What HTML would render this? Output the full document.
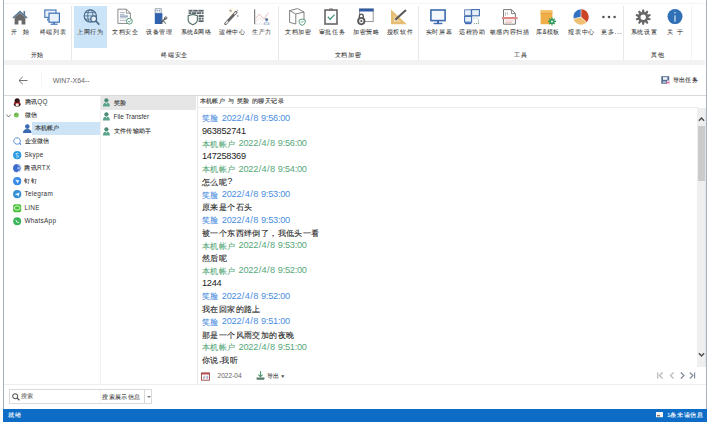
<!DOCTYPE html>
<html><head><meta charset="utf-8"><style>
html,body{margin:0;padding:0;}
body{width:710px;height:424px;position:relative;overflow:hidden;background:#fff;font-family:"Liberation Sans", sans-serif;}
.t{position:absolute;white-space:nowrap;}
.r{position:absolute;display:block;overflow:visible;}
</style></head><body>
<div class="r" style="left:3px;top:0px;width:1px;height:409px;background:#a9b1bd;"></div>
<div class="r" style="left:706px;top:0px;width:1px;height:409px;background:#a9b1bd;"></div>
<div class="r" style="left:4px;top:3px;width:702px;height:1px;background:#f3f3f3;"></div>
<div class="r" style="left:74px;top:6px;width:33px;height:42px;background:#cce4f7;"></div>
<div class="r" style="left:71px;top:6px;width:1px;height:54px;background:#e8e8e8;"></div>
<div class="r" style="left:278px;top:6px;width:1px;height:54px;background:#e8e8e8;"></div>
<div class="r" style="left:418px;top:6px;width:1px;height:54px;background:#e8e8e8;"></div>
<div class="r" style="left:623px;top:6px;width:1px;height:54px;background:#e8e8e8;"></div>
<div class="r" style="left:691px;top:6px;width:1px;height:54px;background:#f4f4f4;"></div>
<div class="r" style="left:4px;top:60px;width:701px;height:5px;background:#f2f2f2;"></div>
<svg class="r" style="left:12px;top:8.5px;" width="16" height="16" viewBox="0 0 16 16"><path d="M8 1.6 L0.4 8.4 L1.6 9.4 L8 3.8 L14.4 9.4 L15.6 8.4 Z" fill="#5b7894"/><rect x="11.5" y="2" width="1.6" height="4" fill="#5b7894"/><path d="M2.6 8.6 L8 4 L13.4 8.6 V15.4 H9.6 V11.5 H6.4 V15.4 H2.6 Z" fill="#6a6a6a"/></svg>
<div class="t" style="left:-19.80px;width:80px;text-align:center;top:28.24px;font-size:6.4px;line-height:8.32px;color:#333;-webkit-text-stroke:0.04px #333;"><span style="letter-spacing:0.6px;">开</span>&nbsp;&nbsp;&nbsp;<span style="letter-spacing:0.6px;">始</span></div>
<svg class="r" style="left:44px;top:8.5px;" width="16" height="16" viewBox="0 0 16 16"><rect x="0.8" y="1" width="11.2" height="7.4" fill="#e9f2fb" stroke="#3f73b5" stroke-width="1.1"/><rect x="5" y="4.2" width="10.4" height="9" fill="#e9f2fb" stroke="#3f73b5" stroke-width="1.2"/><rect x="9" y="13.2" width="2" height="1.6" fill="#3f73b5"/><rect x="6.6" y="14.6" width="7" height="1.2" fill="#3f73b5"/><rect x="3.2" y="9.5" width="1.4" height="2.2" fill="#3f73b5"/></svg>
<div class="t" style="left:13.00px;width:80px;text-align:center;top:28.24px;font-size:6.4px;line-height:8.32px;color:#333;-webkit-text-stroke:0.04px #333;"><span style="letter-spacing:0.6px;">终端列表</span></div>
<svg class="r" style="left:82.5px;top:8.5px;" width="16" height="16" viewBox="0 0 16 16"><g fill="none" stroke="#48698a"><circle cx="7.3" cy="6.9" r="6.1" stroke-width="1.2"/><ellipse cx="7.3" cy="6.9" rx="2.6" ry="6.1" stroke-width="0.9"/><path d="M1.2 6.9 H13.4 M2.2 3.6 H12.4 M2.2 10.2 H12.4" stroke-width="0.8"/></g><circle cx="10.7" cy="9.9" r="2.9" fill="#e6eff6" stroke="#48698a" stroke-width="1.2"/><path d="M12.8 12 L15.8 15.2" stroke="#48698a" stroke-width="1.7" stroke-linecap="round"/></svg>
<div class="t" style="left:50.50px;width:80px;text-align:center;top:28.24px;font-size:6.4px;line-height:8.32px;color:#333;-webkit-text-stroke:0.04px #333;"><span style="letter-spacing:0.6px;">上网行为</span></div>
<svg class="r" style="left:117px;top:8.5px;" width="16" height="16" viewBox="0 0 16 16"><path d="M0.9 0.2 H9.4 L13.4 4.2 V14.4 H0.9 Z" fill="#fff" stroke="#7a7a7a" stroke-width="0.9"/><path d="M9.4 0.2 V4.2 H13.4" fill="none" stroke="#7a7a7a" stroke-width="0.8"/><path d="M3 3.6 H7.5 M3 5.4 H7.5 M3 8.8 H10.5 M3 11.4 H9" stroke="#9aa4b0" stroke-width="0.8"/><path d="M3 7.1 H11" stroke="#4a6ea0" stroke-width="0.9"/><circle cx="12.4" cy="12.2" r="2.9" fill="#fff" stroke="#3e8a6a" stroke-width="0.9"/><path d="M11.1 12.2 L12.1 13.2 L13.7 11.4" fill="none" stroke="#3e8a6a" stroke-width="0.8"/></svg>
<div class="t" style="left:85.50px;width:80px;text-align:center;top:28.24px;font-size:6.4px;line-height:8.32px;color:#333;-webkit-text-stroke:0.04px #333;"><span style="letter-spacing:0.6px;">文档安全</span></div>
<svg class="r" style="left:152px;top:8.5px;" width="16" height="16" viewBox="0 0 16 16"><rect x="3.2" y="-0.2" width="6" height="4.4" fill="#fff" stroke="#7a8a9a" stroke-width="0.8"/><rect x="4.6" y="1.2" width="1.1" height="1.1" fill="#4a6a9a"/><rect x="6.8" y="1.2" width="1.1" height="1.1" fill="#4a6a9a"/><rect x="2.8" y="4.2" width="7.6" height="10.8" fill="#2f63b0"/><path d="M8.2 14.6 L13.6 9.2" stroke="#555" stroke-width="1.3"/><path d="M9 9.6 L13.8 14.6" stroke="#777" stroke-width="1.1"/><circle cx="13.8" cy="9" r="1.2" fill="none" stroke="#555" stroke-width="0.9"/></svg>
<div class="t" style="left:119.50px;width:80px;text-align:center;top:28.24px;font-size:6.4px;line-height:8.32px;color:#333;-webkit-text-stroke:0.04px #333;"><span style="letter-spacing:0.6px;">设备管理</span></div>
<svg class="r" style="left:187.5px;top:8.5px;" width="16" height="16" viewBox="0 0 16 16"><g fill="#5e6a70"><rect x="0.6" y="0.8" width="4" height="1.9"/><rect x="5.2" y="0.8" width="4.6" height="1.9"/><rect x="10.4" y="0.8" width="5.2" height="1.9"/><rect x="0.6" y="3.2" width="2.4" height="1.9"/><rect x="3.6" y="3.2" width="4.4" height="1.9"/><rect x="8.6" y="3.2" width="4.6" height="1.9"/><rect x="13.8" y="3.2" width="1.8" height="1.9"/><rect x="10.6" y="6" width="5" height="2"/><rect x="10.6" y="8.6" width="2.6" height="2"/><rect x="13.8" y="8.6" width="1.8" height="2"/><rect x="10.6" y="11.2" width="5" height="1.9"/></g><path d="M4.8 5.4 L9.4 6.8 V11 Q9.4 14 4.8 15.8 Q0.2 14 0.2 11 V6.8 Z" fill="#fff" stroke="#58786c" stroke-width="1.2"/></svg>
<div class="t" style="left:156.00px;width:80px;text-align:center;top:28.24px;font-size:6.4px;line-height:8.32px;color:#333;-webkit-text-stroke:0.04px #333;"><span style="letter-spacing:0.6px;">系统</span>&amp;<span style="letter-spacing:0.6px;">网络</span></div>
<svg class="r" style="left:223.5px;top:8.5px;" width="16" height="16" viewBox="0 0 16 16"><circle cx="8" cy="2" r="3.5" fill="#fffbe6" opacity="0.7"/><path d="M1.6 14.6 L12.1 3.3" stroke="#666" stroke-width="2.8" stroke-linecap="round"/><path d="M1.9 14.3 L3.6 12.5 M10.6 4.9 L11.8 3.6" stroke="#f4f4f4" stroke-width="1.3" stroke-linecap="round"/><circle cx="6.6" cy="1.8" r="1.2" fill="#aaa"/><circle cx="13.8" cy="7.1" r="1" fill="#aaa"/><circle cx="13.5" cy="1" r="0.7" fill="#bbb"/></svg>
<div class="t" style="left:192.50px;width:80px;text-align:center;top:28.24px;font-size:6.4px;line-height:8.32px;color:#333;-webkit-text-stroke:0.04px #333;"><span style="letter-spacing:0.6px;">运维中心</span></div>
<svg class="r" style="left:254px;top:8.5px;" width="16" height="16" viewBox="0 0 16 16"><path d="M0.7 0.3 V15.2" stroke="#555" stroke-width="0.9"/><path d="M1.6 9.6 L5.2 5 L10 10.2 L14.4 3.6" fill="none" stroke="#dca0a0" stroke-width="0.7"/><path d="M1.6 13 L5.6 8.8 L9 12" fill="none" stroke="#e8c4c4" stroke-width="0.6"/><path d="M1.6 15 H8.6" stroke="#a8b8cc" stroke-width="0.6" stroke-dasharray="1 0.8"/><circle cx="12.6" cy="10.4" r="1.5" fill="#5a7aa0"/><path d="M10.6 13.4 Q12.6 11.6 14.6 13.4 Z" fill="#8aa2c0"/><path d="M9.4 15.2 H15.8 M10.4 13.4 V15.2 M14.8 13.4 V15.2" stroke="#8aa2c0" stroke-width="0.7"/></svg>
<div class="t" style="left:222.00px;width:80px;text-align:center;top:28.24px;font-size:6.4px;line-height:8.32px;color:#333;-webkit-text-stroke:0.04px #333;"><span style="letter-spacing:0.6px;">生产力</span></div>
<svg class="r" style="left:289px;top:8.5px;" width="16" height="16" viewBox="0 0 16 16"><path d="M0.6 1.6 L8.6 -0.4 L15 3 V12 L6.8 15 L0.6 13.4 Z" fill="#fff"/><path d="M0.6 1.6 L8.6 -0.4 L15 3 V11 M15 3 L6.8 5 L0.6 1.6 V13.4 L6.8 15 V5" fill="none" stroke="#747474" stroke-width="0.9"/><path d="M13.2 10 L16.2 11 V13.4 Q16.2 15.4 13.2 16.4 Q10.2 15.4 10.2 13.4 V11 Z" fill="#fff" stroke="#5a9a7e" stroke-width="1"/><path d="M11.8 13.2 L14.6 12.6" stroke="#5a9a7e" stroke-width="0.8"/></svg>
<div class="t" style="left:258.50px;width:80px;text-align:center;top:28.24px;font-size:6.4px;line-height:8.32px;color:#333;-webkit-text-stroke:0.04px #333;"><span style="letter-spacing:0.6px;">文档加密</span></div>
<svg class="r" style="left:324px;top:8.5px;" width="16" height="16" viewBox="0 0 16 16"><rect x="1" y="1" width="12" height="14" fill="#fff" stroke="#666" stroke-width="1.6"/><rect x="5" y="-0.5" width="4" height="2.4" fill="#777"/><path d="M3.8 7.8 L6.2 10.2 L10.6 5.6" fill="none" stroke="#4e9a7a" stroke-width="1.3"/></svg>
<div class="t" style="left:292.00px;width:80px;text-align:center;top:28.24px;font-size:6.4px;line-height:8.32px;color:#333;-webkit-text-stroke:0.04px #333;"><span style="letter-spacing:0.6px;">审批任务</span></div>
<svg class="r" style="left:357px;top:8.5px;" width="16" height="16" viewBox="0 0 16 16"><rect x="2.6" y="0" width="13.6" height="12.6" fill="#fff" stroke="#8a8a8a" stroke-width="0.9"/><rect x="2.2" y="-0.4" width="14.4" height="2.9" fill="#2f5ca4"/><path d="M2.3 9.5 V7.4 Q2.3 5.2 4.3 5.2 Q6.3 5.2 6.3 7.4 V9.5" fill="none" stroke="#555" stroke-width="1.3"/><circle cx="4.3" cy="12.1" r="4.1" fill="#5a5a5a"/><circle cx="4.3" cy="12.1" r="2.3" fill="#eee"/><circle cx="4.3" cy="12.1" r="1" fill="#555"/></svg>
<div class="t" style="left:326.40px;width:80px;text-align:center;top:28.24px;font-size:6.4px;line-height:8.32px;color:#333;-webkit-text-stroke:0.04px #333;"><span style="letter-spacing:0.6px;">加密策略</span></div>
<svg class="r" style="left:391px;top:8.5px;" width="16" height="16" viewBox="0 0 16 16"><path d="M0 0.4 L15.8 15.2 H0 Z" fill="#e6bd72"/><path d="M3 6.6 L9.6 12.8 H3 Z" fill="#f0d49c"/><path d="M4.6 10.6 L14.4 1.6" stroke="#5a5a5a" stroke-width="2.1" stroke-linecap="round"/><path d="M3.2 12 L4.4 10.8" stroke="#f4f0e8" stroke-width="1.4"/></svg>
<div class="t" style="left:360.00px;width:80px;text-align:center;top:28.24px;font-size:6.4px;line-height:8.32px;color:#333;-webkit-text-stroke:0.04px #333;"><span style="letter-spacing:0.6px;">授权软件</span></div>
<svg class="r" style="left:430px;top:8.5px;" width="16" height="16" viewBox="0 0 16 16"><rect x="0.9" y="1" width="14.2" height="10.6" fill="#f3f7fc" stroke="#3e6cae" stroke-width="1.6"/><rect x="7" y="11.8" width="2" height="2.4" fill="#3e6cae"/><rect x="3.6" y="13.8" width="8.8" height="1.4" fill="#3e6cae"/></svg>
<div class="t" style="left:399.00px;width:80px;text-align:center;top:28.24px;font-size:6.4px;line-height:8.32px;color:#333;-webkit-text-stroke:0.04px #333;"><span style="letter-spacing:0.6px;">实时屏幕</span></div>
<svg class="r" style="left:464px;top:8.5px;" width="16" height="16" viewBox="0 0 16 16"><rect x="0.6" y="0.8" width="6.6" height="5.6" fill="#e6f0fa" stroke="#5a7ab0" stroke-width="0.9"/><rect x="7.6" y="0.6" width="7.8" height="6.2" fill="#e6f0fa" stroke="#3f6cb0" stroke-width="1.1"/><rect x="0.6" y="7.4" width="7" height="5.8" fill="#e6f0fa" stroke="#3f6cb0" stroke-width="1.1"/><rect x="1" y="13.6" width="6.4" height="1.6" fill="#3f6cb0"/><g fill="#6a9a7a"><circle cx="10" cy="9" r="0.6"/><circle cx="13" cy="9" r="0.6"/><circle cx="14.5" cy="11" r="0.6"/><circle cx="14.5" cy="13" r="0.6"/><circle cx="10.5" cy="14.5" r="0.6"/><circle cx="12.5" cy="14.5" r="0.6"/><circle cx="14.5" cy="14.5" r="0.6"/></g></svg>
<div class="t" style="left:432.50px;width:80px;text-align:center;top:28.24px;font-size:6.4px;line-height:8.32px;color:#333;-webkit-text-stroke:0.04px #333;"><span style="letter-spacing:0.6px;">远程协助</span></div>
<svg class="r" style="left:502px;top:8.5px;" width="16" height="16" viewBox="0 0 16 16"><path d="M1.5 0.6 H9.4 L13.4 4.6 V15.2 H1.5 Z" fill="#fff" stroke="#777" stroke-width="1"/><path d="M9.4 0.6 V4.6 H13.4" fill="none" stroke="#777" stroke-width="0.9"/><path d="M3.4 3 V7 M5.4 3 V6" stroke="#bbb" stroke-width="0.9"/><rect x="0" y="8" width="15.6" height="2.2" fill="#e08a8a"/><path d="M3.4 12 H11.6 M3.4 13.6 H10" stroke="#e8b0b0" stroke-width="0.8"/></svg>
<div class="t" style="left:469.60px;width:80px;text-align:center;top:28.24px;font-size:6.4px;line-height:8.32px;color:#333;-webkit-text-stroke:0.04px #333;"><span style="letter-spacing:0.6px;">敏感内容扫描</span></div>
<svg class="r" style="left:540px;top:8.5px;" width="16" height="16" viewBox="0 0 16 16"><rect x="0.6" y="1" width="11.8" height="14.2" rx="1" fill="#f0ae48"/><rect x="0.6" y="1" width="11.8" height="3" rx="1" fill="#f5c36c"/><path d="M0.6 4.2 H12.4" stroke="#e09a30" stroke-width="0.6"/><g transform="translate(12,12.4)"><circle r="2.6" fill="#2f9a5a"/><path d="M-4 0 H4 M0 -4 V4 M-2.8 -2.8 L2.8 2.8 M2.8 -2.8 L-2.8 2.8" stroke="#2f9a5a" stroke-width="1.2"/><circle r="1" fill="#fff"/></g></svg>
<div class="t" style="left:508.00px;width:80px;text-align:center;top:28.24px;font-size:6.4px;line-height:8.32px;color:#333;-webkit-text-stroke:0.04px #333;"><span style="letter-spacing:0.6px;">库</span>&amp;<span style="letter-spacing:0.6px;">模板</span></div>
<svg class="r" style="left:572.7px;top:8.5px;" width="16" height="16" viewBox="0 0 16 16"><path d="M8 8 L8 0.3 A7.7 7.7 0 0 1 13.63 13.25 Z" fill="#cc4428"/><path d="M8 8 L13.63 13.25 A7.7 7.7 0 0 1 0.53 9.86 Z" fill="#f0c070"/><path d="M8 8 L0.53 9.86 A7.7 7.7 0 0 1 8 0.3 Z" fill="#3470c0"/><path d="M8 8 L8 0.3 M8 8 L13.63 13.25 M8 8 L0.53 9.86" stroke="#fff" stroke-width="0.6"/></svg>
<div class="t" style="left:541.60px;width:80px;text-align:center;top:28.24px;font-size:6.4px;line-height:8.32px;color:#333;-webkit-text-stroke:0.04px #333;"><span style="letter-spacing:0.6px;">报表中心</span></div>
<svg class="r" style="left:601px;top:8.5px;" width="16" height="16" viewBox="0 0 16 16"><circle cx="2.4" cy="8" r="1.3" fill="#555"/><circle cx="8" cy="8" r="1.3" fill="#555"/><circle cx="13.6" cy="8" r="1.3" fill="#555"/></svg>
<div class="t" style="left:572.00px;width:80px;text-align:center;top:28.24px;font-size:6.4px;line-height:8.32px;color:#333;-webkit-text-stroke:0.04px #333;"><span style="letter-spacing:0.6px;">更多</span><span style="letter-spacing:0.9px">...</span></div>
<svg class="r" style="left:634.5px;top:8.5px;" width="16" height="16" viewBox="0 0 16 16"><path d="M6.86 3.17 L7.35 0.55 L9.05 0.55 L9.54 3.17 L10.07 3.35 L12.01 1.51 L13.38 2.51 L12.24 4.92 L12.57 5.38 L15.22 5.03 L15.74 6.64 L13.39 7.92 L13.39 8.48 L15.74 9.76 L15.22 11.37 L12.57 11.02 L12.24 11.48 L13.38 13.89 L12.01 14.89 L10.07 13.05 L9.54 13.23 L9.05 15.85 L7.35 15.85 L6.86 13.23 L6.33 13.05 L4.39 14.89 L3.02 13.89 L4.16 11.48 L3.83 11.02 L1.18 11.37 L0.66 9.76 L3.01 8.48 L3.01 7.92 L0.66 6.64 L1.18 5.03 L3.83 5.38 L4.16 4.92 L3.02 2.51 L4.39 1.51 L6.33 3.35 Z M8.2 5.5 A2.7 2.7 0 1 0 8.2 10.9 A2.7 2.7 0 1 0 8.2 5.5 Z" fill="#666" fill-rule="evenodd"/></svg>
<div class="t" style="left:604.00px;width:80px;text-align:center;top:28.24px;font-size:6.4px;line-height:8.32px;color:#333;-webkit-text-stroke:0.04px #333;"><span style="letter-spacing:0.6px;">系统设置</span></div>
<svg class="r" style="left:666.5px;top:8.5px;" width="16" height="16" viewBox="0 0 16 16"><circle cx="8" cy="7.6" r="7.5" fill="#3070b6"/><rect x="7.45" y="6.4" width="1.1" height="6.2" fill="#e8f4ff"/><rect x="7.45" y="3" width="1.1" height="1.4" fill="#e8f4ff"/></svg>
<div class="t" style="left:635.20px;width:80px;text-align:center;top:28.24px;font-size:6.4px;line-height:8.32px;color:#333;-webkit-text-stroke:0.04px #333;"><span style="letter-spacing:0.6px;">关</span>&nbsp;&nbsp;<span style="letter-spacing:0.6px;">于</span></div>
<div class="t" style="left:-2.60px;width:80px;text-align:center;top:50.84px;font-size:6.4px;line-height:8.32px;color:#333;-webkit-text-stroke:0.08px #444;"><span style="letter-spacing:0.6px;">开始</span></div>
<div class="t" style="left:134.70px;width:80px;text-align:center;top:50.84px;font-size:6.4px;line-height:8.32px;color:#333;-webkit-text-stroke:0.08px #444;"><span style="letter-spacing:0.6px;">终端安全</span></div>
<div class="t" style="left:308.00px;width:80px;text-align:center;top:50.84px;font-size:6.4px;line-height:8.32px;color:#333;-webkit-text-stroke:0.08px #444;"><span style="letter-spacing:0.6px;">文档加密</span></div>
<div class="t" style="left:481.00px;width:80px;text-align:center;top:50.84px;font-size:6.4px;line-height:8.32px;color:#333;-webkit-text-stroke:0.08px #444;"><span style="letter-spacing:0.6px;">工具</span></div>
<div class="t" style="left:617.80px;width:80px;text-align:center;top:50.84px;font-size:6.4px;line-height:8.32px;color:#333;-webkit-text-stroke:0.08px #444;"><span style="letter-spacing:0.6px;">其他</span></div>
<svg class="r" style="left:17.5px;top:76px;" width="10" height="9" viewBox="0 0 10 9"><path d="M1 4.5 H9.5 M4.8 0.8 L1 4.5 L4.8 8.2" fill="none" stroke="#6a6a6a" stroke-width="0.95"/></svg>
<div class="r" style="left:41px;top:72px;width:1px;height:15px;background:#f5f5f5;"></div>
<div class="t" style="left:52.7px;top:75.95px;font-size:7px;line-height:9.10px;color:#666;">WIN7-X64--</div>
<svg class="r" style="left:661px;top:76px;" width="9" height="8" viewBox="0 0 9 8"><path d="M0.3 0.3 H8.2 V4.6 H6 V7.8 H0.3 Z" fill="#4d6a8e"/><rect x="2" y="1.2" width="4.4" height="2.6" fill="#f4f6fa"/><rect x="1.8" y="5" width="3.2" height="2.2" fill="#a8b8cc"/><path d="M5.4 5.2 L8.6 7.8 M8.6 5.2 L5.4 7.8 M5.4 6.5 H8.6" stroke="#e06a9a" stroke-width="0.8"/></svg>
<div class="t" style="left:672.6px;top:76.17px;font-size:6.2px;line-height:8.06px;color:#333;-webkit-text-stroke:0.12px #333;"><span style="letter-spacing:0.4px;">导出任务</span></div>
<div class="r" style="left:4px;top:95px;width:702px;height:1px;background:#d9d9d9;"></div>
<div class="r" style="left:32px;top:122px;width:68px;height:13px;background:#cde4f7;"></div>
<div class="r" style="left:100px;top:96px;width:1px;height:288px;background:#f0f0f0;"></div>
<svg class="r" style="left:13.2px;top:97.8px;overflow:visible;" width="8.4" height="8.4" viewBox="0 0 8.4 8.4"><ellipse cx="4.2" cy="2.8" rx="2.6" ry="2.6" fill="#301414"/><ellipse cx="4.2" cy="6.2" rx="3.4" ry="2.5" fill="#3a1616"/><path d="M1.4 4.2 Q4.2 5.6 7 4.2 L7.2 5.4 Q4.2 6.8 1.2 5.4 Z" fill="#c02424"/><ellipse cx="4.2" cy="6.8" rx="1.7" ry="1.6" fill="#f6e6e6"/><path d="M4.6 2.6 Q5.4 3.6 4.6 4.4" fill="none" stroke="#a03030" stroke-width="0.6"/></svg>
<div class="t" style="left:24.6px;top:97.84px;font-size:6.4px;line-height:8.32px;color:#333;letter-spacing:0.3px;"><span style="letter-spacing:0.3px;-webkit-text-stroke:0.12px currentColor;">腾讯</span>QQ</div>
<svg class="r" style="left:13.2px;top:111.1px;overflow:visible;" width="8.4" height="8.4" viewBox="0 0 8.4 8.4"><circle cx="3.4" cy="4" r="2.5" fill="#7cc45a"/><circle cx="2.6" cy="3.6" r="0.45" fill="#3a6a2a"/><circle cx="4.2" cy="3.6" r="0.45" fill="#3a6a2a"/></svg>
<div class="t" style="left:24.6px;top:111.14px;font-size:6.4px;line-height:8.32px;color:#333;letter-spacing:0.3px;"><span style="letter-spacing:0.3px;-webkit-text-stroke:0.12px currentColor;">微信</span></div>
<svg class="r" style="left:23px;top:123.8px;" width="9" height="9" viewBox="0 0 9 9"><circle cx="4.3" cy="2.6" r="2.3" fill="#3a6ab0"/><path d="M0 9 Q0 5 4.3 5 Q8.6 5 8.6 9 Z" fill="#3a6ab0"/></svg>
<div class="t" style="left:34.5px;top:124.14px;font-size:6.4px;line-height:8.32px;color:#333;letter-spacing:0.3px;"><span style="letter-spacing:0.3px;-webkit-text-stroke:0.12px currentColor;">本机帐户</span></div>
<svg class="r" style="left:13.2px;top:137.2px;overflow:visible;" width="8.4" height="8.4" viewBox="0 0 8.4 8.4"><path d="M4 0.8 A3.4 3.2 0 1 0 6.6 6.2 L7.6 7.8 L7 5.4 A3.4 3.2 0 0 0 4 0.8 Z" fill="none" stroke="#5a8ad8" stroke-width="1"/></svg>
<div class="t" style="left:24.6px;top:137.24px;font-size:6.4px;line-height:8.32px;color:#333;letter-spacing:0.3px;"><span style="letter-spacing:0.3px;-webkit-text-stroke:0.12px currentColor;">企业微信</span></div>
<svg class="r" style="left:13.2px;top:151.1px;overflow:visible;" width="8.4" height="8.4" viewBox="0 0 8.4 8.4"><circle cx="4.2" cy="4.2" r="4.1" fill="#2a9be2"/><path d="M5.6 2.6 Q4.2 1.8 3 2.6 Q2.4 3.6 4.2 4.2 Q6 4.8 5.4 5.8 Q4.2 6.6 2.8 5.8" fill="none" stroke="#d8f0ff" stroke-width="0.8"/></svg>
<div class="t" style="left:24.4px;top:151.14px;font-size:6.4px;line-height:8.32px;color:#333;letter-spacing:0.3px;">Skype</div>
<svg class="r" style="left:13.2px;top:164.0px;overflow:visible;" width="8.4" height="8.4" viewBox="0 0 8.4 8.4"><circle cx="4.2" cy="4.2" r="4.1" fill="#3d6ccc"/><path d="M4.6 0.6 A3.6 3.6 0 0 1 4.6 7.8" fill="none" stroke="#fff" stroke-width="0.9"/><circle cx="5.6" cy="4.2" r="1.4" fill="#8fb0ec"/></svg>
<div class="t" style="left:24.4px;top:164.04px;font-size:6.4px;line-height:8.32px;color:#333;letter-spacing:0.3px;"><span style="letter-spacing:0.3px;-webkit-text-stroke:0.12px currentColor;">腾讯</span>RTX</div>
<svg class="r" style="left:13.2px;top:177.1px;overflow:visible;" width="8.4" height="8.4" viewBox="0 0 8.4 8.4"><circle cx="4.2" cy="4.2" r="4.1" fill="#3a8ce8"/><path d="M2.2 2.6 L6.4 3.6 L4.4 6.6 L3.8 4.8 Z" fill="#e8f2ff"/></svg>
<div class="t" style="left:24.4px;top:177.14px;font-size:6.4px;line-height:8.32px;color:#333;letter-spacing:0.3px;"><span style="letter-spacing:0.3px;-webkit-text-stroke:0.12px currentColor;">钉钉</span></div>
<svg class="r" style="left:13.2px;top:190.3px;overflow:visible;" width="8.4" height="8.4" viewBox="0 0 8.4 8.4"><circle cx="4.2" cy="4.2" r="4.1" fill="#3590d6"/><path d="M1.8 4.2 L6.6 2.4 L5.6 6.4 L4 5 Z" fill="#e8f4ff"/></svg>
<div class="t" style="left:24.4px;top:190.34px;font-size:6.4px;line-height:8.32px;color:#333;letter-spacing:0.3px;">Telegram</div>
<svg class="r" style="left:13.2px;top:203.6px;overflow:visible;" width="8.4" height="8.4" viewBox="0 0 8.4 8.4"><rect x="0.2" y="0.2" width="8" height="8" rx="1.8" fill="#46c034"/><ellipse cx="4.2" cy="4" rx="2.8" ry="2.1" fill="none" stroke="#fff" stroke-width="0.8"/></svg>
<div class="t" style="left:24.4px;top:203.64px;font-size:6.4px;line-height:8.32px;color:#333;letter-spacing:0.3px;">LINE</div>
<svg class="r" style="left:13.2px;top:216.8px;overflow:visible;" width="8.4" height="8.4" viewBox="0 0 8.4 8.4"><circle cx="4.2" cy="4.2" r="4" fill="#3cb45c"/><path d="M2.8 3 Q3.4 5.8 5.8 5.6" fill="none" stroke="#fff" stroke-width="0.9"/></svg>
<div class="t" style="left:24.4px;top:216.84px;font-size:6.4px;line-height:8.32px;color:#333;letter-spacing:0.3px;">WhatsApp</div>
<svg class="r" style="left:6px;top:113.5px;" width="5" height="4" viewBox="0 0 5 4"><path d="M0.4 0.6 L2.5 3 L4.6 0.6" fill="none" stroke="#666" stroke-width="0.9"/></svg>
<div class="r" style="left:100.5px;top:96px;width:95.5px;height:14px;background:#e6e6e6;"></div>
<div class="r" style="left:197px;top:96px;width:1px;height:288px;background:#e6e6e6;"></div>
<svg class="r" style="left:101.5px;top:98.2px;" width="9" height="9" viewBox="0 0 9 9"><circle cx="4.4" cy="2.3" r="2.1" fill="#4e8c7a"/><path d="M0.9 8.6 Q0.9 4.6 4.4 4.6 Q7.9 4.6 7.9 8.6 Z" fill="#5aa58a"/><path d="M3.4 4.7 L4.4 6.2 L5.4 4.7 Z" fill="#cfeee2"/></svg>
<div class="t" style="left:113.5px;top:98.54px;font-size:6.4px;line-height:8.32px;color:#333;"><span style="letter-spacing:0.4px;-webkit-text-stroke:0.12px currentColor;">笑脸</span></div>
<svg class="r" style="left:101.5px;top:112.3px;" width="9" height="9" viewBox="0 0 9 9"><circle cx="4.4" cy="2.3" r="2.1" fill="#4e8c7a"/><path d="M0.9 8.6 Q0.9 4.6 4.4 4.6 Q7.9 4.6 7.9 8.6 Z" fill="#5aa58a"/><path d="M3.4 4.7 L4.4 6.2 L5.4 4.7 Z" fill="#cfeee2"/></svg>
<div class="t" style="left:113.5px;top:112.64px;font-size:6.4px;line-height:8.32px;color:#333;">File Transfer</div>
<svg class="r" style="left:101.5px;top:126.5px;" width="9" height="9" viewBox="0 0 9 9"><circle cx="4.4" cy="2.3" r="2.1" fill="#4e8c7a"/><path d="M0.9 8.6 Q0.9 4.6 4.4 4.6 Q7.9 4.6 7.9 8.6 Z" fill="#5aa58a"/><path d="M3.4 4.7 L4.4 6.2 L5.4 4.7 Z" fill="#cfeee2"/></svg>
<div class="t" style="left:113.5px;top:126.84px;font-size:6.4px;line-height:8.32px;color:#333;"><span style="letter-spacing:0.4px;-webkit-text-stroke:0.12px currentColor;">文件传输助手</span></div>
<div class="t" style="left:199.6px;top:97.47px;font-size:6.2px;line-height:8.06px;color:#333;-webkit-text-stroke:0.12px currentColor;word-spacing:0.8px;"><span style="letter-spacing:0.4px;">本机帐户</span> <span style="letter-spacing:0.4px;">与</span> <span style="letter-spacing:0.4px;">笑脸</span> <span style="letter-spacing:0.4px;">的聊天记录</span></div>
<div class="r" style="left:197px;top:107px;width:501px;height:1px;background:#ececec;"></div>
<div class="t" style="left:202px;top:111.80px;font-size:9.2px;line-height:12.00px;color:#4a8ee0;letter-spacing:-0.25px;word-spacing:0.7px;"><span style="font-size:8.4px;letter-spacing:0.4px;position:relative;top:0.6px;-webkit-text-stroke:0.1px currentColor;">笑脸</span> 2022<span style="padding:0 0.6px">/</span>4<span style="padding:0 0.6px">/</span>8 9:56:00</div>
<div class="t" style="left:202px;top:124.52px;font-size:9.2px;line-height:12.00px;color:#222;letter-spacing:-0.25px;word-spacing:0.7px;">963852741</div>
<div class="t" style="left:202px;top:137.24px;font-size:9.2px;line-height:12.00px;color:#56a87a;letter-spacing:-0.25px;word-spacing:0.7px;"><span style="font-size:8.4px;letter-spacing:0.4px;position:relative;top:0.6px;-webkit-text-stroke:0.1px currentColor;">本机帐户</span> 2022<span style="padding:0 0.6px">/</span>4<span style="padding:0 0.6px">/</span>8 9:56:00</div>
<div class="t" style="left:202px;top:149.96px;font-size:9.2px;line-height:12.00px;color:#222;letter-spacing:-0.25px;word-spacing:0.7px;">147258369</div>
<div class="t" style="left:202px;top:162.68px;font-size:9.2px;line-height:12.00px;color:#56a87a;letter-spacing:-0.25px;word-spacing:0.7px;"><span style="font-size:8.4px;letter-spacing:0.4px;position:relative;top:0.6px;-webkit-text-stroke:0.1px currentColor;">本机帐户</span> 2022<span style="padding:0 0.6px">/</span>4<span style="padding:0 0.6px">/</span>8 9:54:00</div>
<div class="t" style="left:202px;top:175.40px;font-size:9.2px;line-height:12.00px;color:#222;letter-spacing:-0.25px;word-spacing:0.7px;"><span style="font-size:8.4px;letter-spacing:0.4px;position:relative;top:0.6px;-webkit-text-stroke:0.1px currentColor;">怎么呢</span>?</div>
<div class="t" style="left:202px;top:188.12px;font-size:9.2px;line-height:12.00px;color:#4a8ee0;letter-spacing:-0.25px;word-spacing:0.7px;"><span style="font-size:8.4px;letter-spacing:0.4px;position:relative;top:0.6px;-webkit-text-stroke:0.1px currentColor;">笑脸</span> 2022<span style="padding:0 0.6px">/</span>4<span style="padding:0 0.6px">/</span>8 9:53:00</div>
<div class="t" style="left:202px;top:200.84px;font-size:9.2px;line-height:12.00px;color:#222;letter-spacing:-0.25px;word-spacing:0.7px;"><span style="font-size:8.4px;letter-spacing:0.4px;position:relative;top:0.6px;-webkit-text-stroke:0.1px currentColor;">原来是个石头</span></div>
<div class="t" style="left:202px;top:213.56px;font-size:9.2px;line-height:12.00px;color:#4a8ee0;letter-spacing:-0.25px;word-spacing:0.7px;"><span style="font-size:8.4px;letter-spacing:0.4px;position:relative;top:0.6px;-webkit-text-stroke:0.1px currentColor;">笑脸</span> 2022<span style="padding:0 0.6px">/</span>4<span style="padding:0 0.6px">/</span>8 9:53:00</div>
<div class="t" style="left:202px;top:226.28px;font-size:9.2px;line-height:12.00px;color:#222;letter-spacing:-0.25px;word-spacing:0.7px;"><span style="font-size:8.4px;letter-spacing:0.4px;position:relative;top:0.6px;-webkit-text-stroke:0.1px currentColor;">被一个东西绊倒了，我低头一看</span></div>
<div class="t" style="left:202px;top:239.00px;font-size:9.2px;line-height:12.00px;color:#56a87a;letter-spacing:-0.25px;word-spacing:0.7px;"><span style="font-size:8.4px;letter-spacing:0.4px;position:relative;top:0.6px;-webkit-text-stroke:0.1px currentColor;">本机帐户</span> 2022<span style="padding:0 0.6px">/</span>4<span style="padding:0 0.6px">/</span>8 9:53:00</div>
<div class="t" style="left:202px;top:251.72px;font-size:9.2px;line-height:12.00px;color:#222;letter-spacing:-0.25px;word-spacing:0.7px;"><span style="font-size:8.4px;letter-spacing:0.4px;position:relative;top:0.6px;-webkit-text-stroke:0.1px currentColor;">然后呢</span></div>
<div class="t" style="left:202px;top:264.44px;font-size:9.2px;line-height:12.00px;color:#56a87a;letter-spacing:-0.25px;word-spacing:0.7px;"><span style="font-size:8.4px;letter-spacing:0.4px;position:relative;top:0.6px;-webkit-text-stroke:0.1px currentColor;">本机帐户</span> 2022<span style="padding:0 0.6px">/</span>4<span style="padding:0 0.6px">/</span>8 9:52:00</div>
<div class="t" style="left:202px;top:277.16px;font-size:9.2px;line-height:12.00px;color:#222;letter-spacing:-0.25px;word-spacing:0.7px;">1244</div>
<div class="t" style="left:202px;top:289.88px;font-size:9.2px;line-height:12.00px;color:#4a8ee0;letter-spacing:-0.25px;word-spacing:0.7px;"><span style="font-size:8.4px;letter-spacing:0.4px;position:relative;top:0.6px;-webkit-text-stroke:0.1px currentColor;">笑脸</span> 2022<span style="padding:0 0.6px">/</span>4<span style="padding:0 0.6px">/</span>8 9:52:00</div>
<div class="t" style="left:202px;top:302.60px;font-size:9.2px;line-height:12.00px;color:#222;letter-spacing:-0.25px;word-spacing:0.7px;"><span style="font-size:8.4px;letter-spacing:0.4px;position:relative;top:0.6px;-webkit-text-stroke:0.1px currentColor;">我在回家的路上</span></div>
<div class="t" style="left:202px;top:315.32px;font-size:9.2px;line-height:12.00px;color:#4a8ee0;letter-spacing:-0.25px;word-spacing:0.7px;"><span style="font-size:8.4px;letter-spacing:0.4px;position:relative;top:0.6px;-webkit-text-stroke:0.1px currentColor;">笑脸</span> 2022<span style="padding:0 0.6px">/</span>4<span style="padding:0 0.6px">/</span>8 9:51:00</div>
<div class="t" style="left:202px;top:328.04px;font-size:9.2px;line-height:12.00px;color:#222;letter-spacing:-0.25px;word-spacing:0.7px;"><span style="font-size:8.4px;letter-spacing:0.4px;position:relative;top:0.6px;-webkit-text-stroke:0.1px currentColor;">那是一个风雨交加的夜晚</span></div>
<div class="t" style="left:202px;top:340.76px;font-size:9.2px;line-height:12.00px;color:#56a87a;letter-spacing:-0.25px;word-spacing:0.7px;"><span style="font-size:8.4px;letter-spacing:0.4px;position:relative;top:0.6px;-webkit-text-stroke:0.1px currentColor;">本机帐户</span> 2022<span style="padding:0 0.6px">/</span>4<span style="padding:0 0.6px">/</span>8 9:51:00</div>
<div class="t" style="left:202px;top:353.48px;font-size:9.2px;line-height:12.00px;color:#222;letter-spacing:-0.25px;word-spacing:0.7px;"><span style="font-size:8.4px;letter-spacing:0.4px;position:relative;top:0.6px;-webkit-text-stroke:0.1px currentColor;">你说</span>,<span style="font-size:8.4px;letter-spacing:0.4px;position:relative;top:0.6px;-webkit-text-stroke:0.1px currentColor;">我听</span></div>
<div class="r" style="left:697px;top:108px;width:9px;height:259px;background:#efefef;"></div>
<div class="r" style="left:698px;top:126px;width:7px;height:55px;background:#cbcbcb;"></div>
<div class="r" style="left:705px;top:108px;width:1px;height:259px;background:#dfe6ee;"></div>
<svg class="r" style="left:698px;top:116px;" width="7" height="6" viewBox="0 0 7 6"><path d="M0.9 4.8 L3.5 2 L6.1 4.8" fill="none" stroke="#505050" stroke-width="1.5"/></svg>
<svg class="r" style="left:698px;top:352px;" width="7" height="6" viewBox="0 0 7 6"><path d="M0.9 1.2 L3.5 4 L6.1 1.2" fill="none" stroke="#505050" stroke-width="1.5"/></svg>
<svg class="r" style="left:201px;top:371.5px;" width="9" height="8.5" viewBox="0 0 9 8.5"><rect x="0.5" y="0.9" width="8" height="7.3" fill="#fff" stroke="#a04848" stroke-width="0.9"/><rect x="0.5" y="0.9" width="8" height="1.6" fill="#b85050"/><path d="M2.4 4.2 H4 V5.4 H2.4 V6.8 H4 M5.2 4.2 H6.8 V6.8 H5.2 M5.2 5.4 H6.8" fill="none" stroke="#8888a8" stroke-width="0.6"/></svg>
<div class="t" style="left:217.5px;top:371.51px;font-size:6.6px;line-height:8.58px;color:#666;">2022-04</div>
<svg class="r" style="left:256px;top:371px;" width="9" height="9" viewBox="0 0 9 9"><path d="M4.5 0.3 V5.6 M2.4 3.6 L4.5 5.8 L6.6 3.6" fill="none" stroke="#4e9470" stroke-width="1.1"/><path d="M0.4 6.4 H8.6 L8.2 8.8 H0.8 Z" fill="#5a7a6a"/></svg>
<div class="t" style="left:267px;top:371.57px;font-size:6.2px;line-height:8.06px;color:#444;"><span style="letter-spacing:0.4px;-webkit-text-stroke:0.1px currentColor;">导出</span><span style="font-size:5px;margin-left:0.5px">▼</span></div>
<svg class="r" style="left:656.5px;top:372.4px;" width="7" height="7" viewBox="0 0 7 7"><path d="M0.7 0.5 V6.5 M5.6 0.5 L2.4 3.5 L5.6 6.5" fill="none" stroke="#b4b4b4" stroke-width="1.15"/></svg>
<svg class="r" style="left:668.5px;top:372.4px;" width="7" height="7" viewBox="0 0 7 7"><path d="M4.6 0.5 L1.4 3.5 L4.6 6.5" fill="none" stroke="#b8b8b8" stroke-width="1.15"/></svg>
<svg class="r" style="left:679.5px;top:372.4px;" width="7" height="7" viewBox="0 0 7 7"><path d="M0.8 0.5 L4 3.5 L0.8 6.5" fill="none" stroke="#7d8794" stroke-width="1.15"/></svg>
<svg class="r" style="left:689px;top:372.4px;" width="7" height="7" viewBox="0 0 7 7"><path d="M0.8 0.5 L4 3.5 L0.8 6.5 M5.6 0.5 V6.5" fill="none" stroke="#7d8a9a" stroke-width="1.15"/></svg>
<div class="r" style="left:4px;top:384px;width:702px;height:1px;background:#eeeeee;"></div>
<div class="r" style="left:9px;top:389px;width:143px;height:14.5px;background:#fff;box-sizing:border-box;border:1px solid #dadada;"></div>
<div class="r" style="left:144px;top:389px;width:1px;height:14.5px;background:#d8d8d8;"></div>
<div class="r" style="left:100px;top:390px;width:1px;height:13px;background:#f2f2f2;"></div>
<svg class="r" style="left:12px;top:393px;" width="8" height="7.5" viewBox="0 0 8 7.5"><circle cx="3.2" cy="3.2" r="2.5" fill="none" stroke="#555" stroke-width="1.05"/><path d="M5 5 L7.4 7.3" stroke="#555" stroke-width="1.2"/></svg>
<div class="t" style="left:21px;top:392.47px;font-size:6.2px;line-height:8.06px;color:#666;"><span style="letter-spacing:0.4px;-webkit-text-stroke:0.08px currentColor;">搜索</span></div>
<div class="t" style="left:102.3px;top:392.97px;font-size:6.2px;line-height:8.06px;color:#333;-webkit-text-stroke:0.06px currentColor;"><span style="letter-spacing:0.4px;">搜索展示信息</span></div>
<svg class="r" style="left:145.5px;top:395px;" width="6" height="4" viewBox="0 0 6 4"><path d="M1 1 L3 3 L5 1 Z" fill="#777"/></svg>
<div class="r" style="left:3px;top:409px;width:704px;height:13px;background:#0d6dc6;"></div>
<div class="t" style="left:8.2px;top:411.27px;font-size:6.2px;line-height:8.06px;color:#fff;"><span style="letter-spacing:0.4px;-webkit-text-stroke:0.06px currentColor;">就绪</span></div>
<svg class="r" style="left:655.8px;top:412.2px;" width="7" height="5.5" viewBox="0 0 7 5.5"><rect x="0" y="0" width="7" height="5.2" fill="#f4f4f4"/><rect x="1" y="3" width="3" height="1.3" fill="#8a7460"/></svg>
<div class="t" style="left:667px;top:411.27px;font-size:6.2px;line-height:8.06px;color:#fff;">1<span style="letter-spacing:0.55px;-webkit-text-stroke:0.1px currentColor;">条未读信息</span></div>
</body></html>
